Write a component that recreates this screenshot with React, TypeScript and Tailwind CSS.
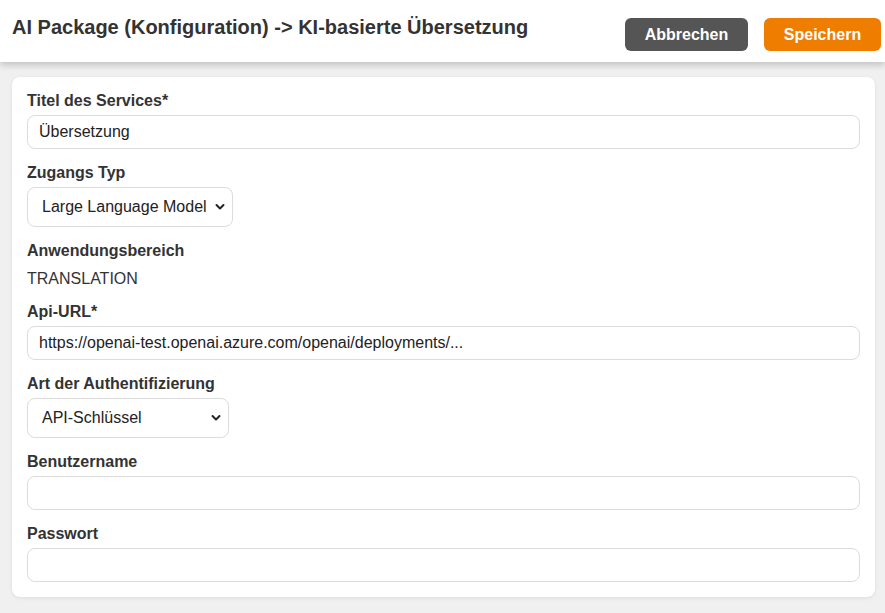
import type { ReactNode } from 'react';

function Label({ children }: { children: ReactNode }) {
  return <label className="block text-[16px] leading-[20px] font-bold text-[#333] mb-[4px]">{children}</label>;
}

function TextInput({ value = '' }: { value?: string }) {
  return (
    <input
      type="text"
      defaultValue={value}
      className="block w-full h-[34px] px-[11px] rounded-[8px] border border-[#dcdcdc] bg-white text-[16px] text-[#222] outline-none"
    />
  );
}

function Select({ options, width }: { options: string[]; width: string }) {
  return (
    <div className={`relative ${width}`}>
      <select className="block w-full h-[40px] pl-[14px] pr-[20px] rounded-[8px] border border-[#dcdcdc] bg-white text-[16px] text-[#222] appearance-none outline-none">
        {options.map((o) => (
          <option key={o}>{o}</option>
        ))}
      </select>
      <svg
        className="absolute right-[8px] top-1/2 -translate-y-1/2 pointer-events-none"
        width="10"
        height="7"
        viewBox="0 0 10 7"
        fill="none"
        stroke="#222"
        strokeWidth="2"
        strokeLinecap="round"
        strokeLinejoin="round"
      >
        <path d="M1.5 1.5L5 5l3.5-3.5" />
      </svg>
    </div>
  );
}

export default function App() {
  return (
    <div className="min-h-[613px] bg-[#f0f0f0] font-['Liberation_Sans',Arial,sans-serif] text-[#333]">
      {/* Top bar */}
      <header className="relative z-10 h-[62px] bg-white shadow-[0_3px_7px_rgba(0,0,0,0.2)] flex items-start justify-between pl-[12px] pr-[4px]">
        <h1 className="mt-[15px] text-[20px] leading-[24px] font-bold text-[#333]">
          AI Package (Konfiguration) -&gt; KI-basierte Übersetzung
        </h1>
        <div className="flex gap-[16px] mt-[18px]">
          <button className="w-[123px] h-[33px] rounded-[6px] bg-[#555555] text-white text-[16px] font-bold">Abbrechen</button>
          <button className="w-[117px] h-[33px] rounded-[6px] bg-[#ef7d00] text-white text-[16px] font-bold">Speichern</button>
        </div>
      </header>

      {/* Form card */}
      <div className="pl-[12px] pr-[10px] pt-[15px] pb-[16px]">
        <div className="bg-white rounded-[8px] shadow-[0_1px_4px_rgba(0,0,0,0.08)] px-[15px] pt-[14px] pb-[15px] flex flex-col gap-[14px]">
          <div>
            <Label>Titel des Services*</Label>
            <TextInput value="Übersetzung" />
          </div>
          <div>
            <Label>Zugangs Typ</Label>
            <Select options={['Large Language Model']} width="w-[206px]" />
          </div>
          <div>
            <Label>Anwendungsbereich</Label>
            <div className="text-[16px] leading-[19px] text-[#333] mt-[8px]">TRANSLATION</div>
          </div>
          <div>
            <Label>Api-URL*</Label>
            <TextInput value="https://openai-test.openai.azure.com/openai/deployments/..." />
          </div>
          <div>
            <Label>Art der Authentifizierung</Label>
            <Select options={['API-Schlüssel']} width="w-[202px]" />
          </div>
          <div>
            <Label>Benutzername</Label>
            <TextInput />
          </div>
          <div>
            <Label>Passwort</Label>
            <TextInput />
          </div>
        </div>
      </div>
    </div>
  );
}
